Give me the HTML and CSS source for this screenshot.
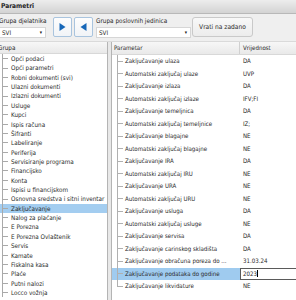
FILE: index.html
```html
<!DOCTYPE html>
<html lang="hr">
<head>
  <meta charset="UTF-8" />
  <title>Parametri</title>
  <link rel="stylesheet" href="styles.css">
</head>
<body>
  <div class="window">
    <div class="titlebar">Parametri</div>

    <div class="toolbar">
      <div class="field field-djelatnik">
        <label>Grupa djelatnika</label>
        <div class="select">SVI<span class="caret">▾</span></div>
      </div>
      <button class="arrow-btn arrow-first">
        <svg width="7" height="8" viewBox="0 0 7 8"><polygon points="0.5,0 6.5,4 0.5,8" /></svg>
      </button>
      <button class="arrow-btn">
        <svg width="7" height="8" viewBox="0 0 7 8"><polygon points="6.5,0 0.5,4 6.5,8" /></svg>
      </button>
      <div class="field field-jedinica">
        <label>Grupa poslovnih jedinica</label>
        <div class="select">SVI<span class="caret">▾</span></div>
      </div>
      <button class="btn-reset">Vrati na zadano</button>
    </div>

    <div class="panes">
      <div class="tree">
        <div class="tree-head">Grupa</div>
        <ul class="tree-list">
          <li>Opći podaci</li>
          <li>Opći parametri</li>
          <li>Robni dokumenti (svi)</li>
          <li>Ulazni dokumenti</li>
          <li>Izlazni dokumenti</li>
          <li>Usluge</li>
          <li>Kupci</li>
          <li>Ispis računa</li>
          <li>Šifranti</li>
          <li>Labeliranje</li>
          <li>Periferija</li>
          <li>Servisiranje programa</li>
          <li>Financijsko</li>
          <li>Konta</li>
          <li>Ispisi u financijskom</li>
          <li>Osnovna sredstva i sitni inventar</li>
          <li class="selected">Zaključavanje</li>
          <li>Nalog za plaćanje</li>
          <li>E Porezna</li>
          <li>E Porezna Ovlaštenik</li>
          <li>Servis</li>
          <li>Kamate</li>
          <li>Fiskalna kasa</li>
          <li>Plaće</li>
          <li>Putni nalozi</li>
          <li>Locco vožnja</li>
        </ul>
      </div>

      <div class="splitter"></div>

      <div class="grid">
        <div class="grid-head">
          <span class="col-name">Parametar</span>
          <span class="col-value">Vrijednost</span>
        </div>
        <div class="grid-row"><span class="col-name">Zaključavanje ulaza</span><span class="col-value">DA</span></div>
        <div class="grid-row"><span class="col-name">Automatski zaključaj ulaze</span><span class="col-value">UVP</span></div>
        <div class="grid-row"><span class="col-name">Zaključavanje izlaza</span><span class="col-value">DA</span></div>
        <div class="grid-row"><span class="col-name">Automatski zaključaj izlaze</span><span class="col-value">IFV;FI</span></div>
        <div class="grid-row"><span class="col-name">Zaključavanje temeljnica</span><span class="col-value">DA</span></div>
        <div class="grid-row"><span class="col-name">Automatski zaključaj temeljnice</span><span class="col-value">IZ;</span></div>
        <div class="grid-row"><span class="col-name">Zaključavanje blagajne</span><span class="col-value">NE</span></div>
        <div class="grid-row"><span class="col-name">Automatski zaključaj blagajne</span><span class="col-value">NE</span></div>
        <div class="grid-row"><span class="col-name">Zaključavanje IRA</span><span class="col-value">DA</span></div>
        <div class="grid-row"><span class="col-name">Automatski zaključaj IRU</span><span class="col-value">NE</span></div>
        <div class="grid-row"><span class="col-name">Zaključavanje URA</span><span class="col-value">NE</span></div>
        <div class="grid-row"><span class="col-name">Automatski zaključaj URU</span><span class="col-value">NE</span></div>
        <div class="grid-row"><span class="col-name">Zaključavanje usluga</span><span class="col-value">DA</span></div>
        <div class="grid-row"><span class="col-name">Automatski zaključaj usluge</span><span class="col-value">NE</span></div>
        <div class="grid-row"><span class="col-name">Zaključavanje servisa</span><span class="col-value">DA</span></div>
        <div class="grid-row"><span class="col-name">Zaključavanje carinskog skladišta</span><span class="col-value">DA</span></div>
        <div class="grid-row"><span class="col-name">Zaključavanje obračuna poreza do ...</span><span class="col-value">31.03.24</span></div>
        <div class="grid-row selected"><span class="col-name">Zaključavanje podataka do godine</span><span class="col-value editor"><span class="edit-text">2023</span></span></div>
        <div class="grid-row last"><span class="col-name">Zaključavanje likvidature</span><span class="col-value">NE</span></div>
      </div>
    </div>
  </div>
</body>
</html>
```

FILE: styles.css
```css
html, body {
  margin: 0;
  width: 296px;
  height: 300px;
  overflow: hidden;
  background: #f0f0f0;
}

body {
  font-family: "DejaVu Sans Condensed", "DejaVu Sans", sans-serif;
  font-size: 6.3px;
  color: #2a2a2a;
}

.window {
  margin-left: -3px;
  width: 302px;
}

/* naslov prozora */
.titlebar {
  height: 13px;
  line-height: 13px;
  padding-left: 4px;
  background: linear-gradient(#ededed, #d3d3d3);
  border-bottom: 1px solid #b8b8b8;
  font-weight: bold;
  font-size: 6.6px;
  color: #1e1e1e;
}

/* alatna traka */
.toolbar {
  height: 24px;
  padding-top: 3px;
  display: flex;
  align-items: flex-start;
  background: #efefef;
}

.field label {
  display: block;
  height: 8px;
  line-height: 8px;
  font-size: 6.4px;
  color: #2a2a2a;
  white-space: nowrap;
}

.field-djelatnik {
  margin-left: 2px;
  width: 47px;
}

.field-jedinica {
  margin-left: 3px;
  width: 95px;
}

.select {
  margin-top: 2px;
  height: 9px;
  line-height: 9px;
  padding-left: 2px;
  background: #fff;
  border: 1px solid #d6d6d6;
  display: flex;
  justify-content: space-between;
  font-size: 6.3px;
}

.caret {
  width: 8px;
  text-align: center;
  font-size: 5px;
  color: #111;
}

.arrow-btn {
  width: 19px;
  height: 20px;
  margin-left: 2px;
  padding: 0;
  border: 1px solid #a9c4de;
  border-radius: 2px;
  background: linear-gradient(#fdfdfd, #f1f4f7);
  display: flex;
  align-items: center;
  justify-content: center;
}

.arrow-first {
  margin-left: 7px;
}

.arrow-btn svg {
  fill: #1767b8;
}

.btn-reset {
  margin-left: 1px;
  width: 61px;
  height: 20px;
  padding: 0;
  border: 1px solid #c9c9c9;
  border-radius: 3px;
  background: linear-gradient(#f8f8f8, #ececec);
  font-family: inherit;
  font-size: 6.6px;
  color: #2a2a2a;
}

/* paneli */
.panes {
  display: flex;
  height: 262px;
  border-top: 1px solid #dadada;
}

.tree {
  width: 110px;
  background: #fff;
  border-right: 1px solid #b4b4b4;
}

.tree-head {
  height: 11px;
  line-height: 11px;
  padding-left: 1px;
  background: linear-gradient(#f7f7f7, #e9e9e9);
  border-bottom: 1px solid #d8d8d8;
}

.tree-list {
  list-style: none;
  margin: 0;
  padding: 0;
}

.tree-list li {
  height: 9.36px;
  line-height: 9.36px;
  padding-left: 14px;
  white-space: nowrap;
  background-image: linear-gradient(#a9a9a9, #a9a9a9), linear-gradient(#a9a9a9, #a9a9a9);
  background-size: 1px 100%, 6px 1px;
  background-position: 5px 0, 5px 50%;
  background-repeat: no-repeat;
}

.tree-list li.selected {
  background-color: #a3cdf0;
}

.splitter {
  width: 3px;
  background: #e8e8e8;
}

.grid {
  flex: 1;
  background: #fff;
  border-left: 1px solid #b4b4b4;
  font-size: 6.1px;
}

.grid-head {
  display: flex;
  height: 12px;
  line-height: 12px;
  background: linear-gradient(#f7f7f7, #e9e9e9);
  border-bottom: 0.5px solid #d8d8d8;
}

.grid-head .col-name {
  padding-left: 2px;
  border-right: 1px solid #d0d0d0;
}

.col-name {
  width: 128px;
  box-sizing: border-box;
  white-space: nowrap;
  overflow: hidden;
}

.col-value {
  flex: 1;
  padding-left: 3px;
  white-space: nowrap;
}

.grid-row {
  display: flex;
  height: 12.5px;
  line-height: 12.5px;
}

.grid-row .col-name {
  padding-left: 13px;
  background-image: linear-gradient(#b0b0b0, #b0b0b0), linear-gradient(#b0b0b0, #b0b0b0);
  background-size: 1px 100%, 6px 1px;
  background-position: 5px 0, 5px 50%;
  background-repeat: no-repeat;
}

.grid-row.last .col-name {
  background-size: 1px 50%, 6px 1px;
}

.grid-row.selected .col-name {
  background-color: #9fcbef;
}

.col-value.editor {
  box-sizing: border-box;
  border: 1px solid #5a5a5a;
  padding-left: 2px;
  line-height: 10.5px;
  background: #fff;
}

.edit-text {
  padding-right: 0.5px;
  border-right: 1px solid #000;
}
```
